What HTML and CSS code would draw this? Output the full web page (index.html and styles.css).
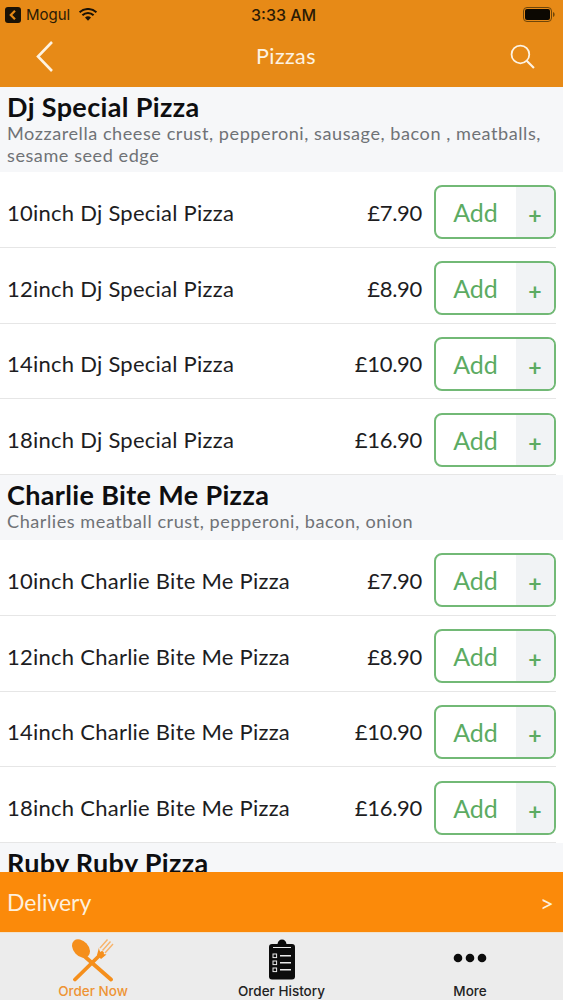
FILE: index.html
```html
<!DOCTYPE html>
<html lang="en">
<head>
<meta charset="utf-8">
<title>Pizzas</title>
<link rel="stylesheet" href="styles.css">
</head>
<body>
<div class="app">
  <header class="top">
    <div class="status">
      <div class="status-left">
        <svg class="back-badge" viewBox="0 0 16 16"><rect width="16" height="16" rx="3" fill="#1a1206"/><path d="M10 3.8 5.8 8l4.2 4.2" fill="none" stroke="#e78a17" stroke-width="2.2"/></svg>
        <span class="carrier">Mogul</span>
        <svg class="wifi" viewBox="0 0 18 13"><path d="M0.6 4.4a12 12 0 0 1 16.8 0" fill="none" stroke="#1a1206" stroke-width="2"/><path d="M3.4 7.2a8 8 0 0 1 11.2 0" fill="none" stroke="#1a1206" stroke-width="2"/><path d="M6 9.6a4.4 4.4 0 0 1 6 0L9 12.8z" fill="#1a1206"/></svg>
      </div>
      <span class="clock">3:33 AM</span>
      <svg class="battery" viewBox="0 0 32 15"><rect x="0.5" y="0.5" width="28" height="14" rx="3.5" fill="none" stroke="#6e4509"/><rect x="2" y="2" width="25" height="11" rx="2" fill="#0c0802"/><path d="M30 5v5c1.2-.4 1.6-1.4 1.6-2.5S31.200 5.400 30 5z" fill="#6e4509"/></svg>
    </div>
    <div class="nav">
      <svg class="nav-back" viewBox="0 0 18 32"><path d="M16 2 2 16.500 16 31" fill="none" stroke="#fdf3e3" stroke-width="2.600"/></svg>
      <span class="nav-title">Pizzas</span>
      <svg class="nav-search" viewBox="0 0 24 24"><circle cx="10" cy="10" r="8.500" fill="none" stroke="#fdf3e3" stroke-width="1.700"/><path d="m16 16 7 7" fill="none" stroke="#fdf3e3" stroke-width="2"/></svg>
    </div>
  </header>

  <main class="list">
    <section class="group">
      <h2>Dj Special Pizza</h2>
      <p>Mozzarella cheese crust, pepperoni, sausage, bacon , meatballs, sesame seed edge</p>
    </section>
    <div class="row"><span class="name">10inch Dj Special Pizza</span><span class="price">£7.90</span><div class="add"><span class="add-label">Add</span><span class="add-plus">+</span></div></div>
    <div class="row"><span class="name">12inch Dj Special Pizza</span><span class="price">£8.90</span><div class="add"><span class="add-label">Add</span><span class="add-plus">+</span></div></div>
    <div class="row"><span class="name">14inch Dj Special Pizza</span><span class="price">£10.90</span><div class="add"><span class="add-label">Add</span><span class="add-plus">+</span></div></div>
    <div class="row"><span class="name">18inch Dj Special Pizza</span><span class="price">£16.90</span><div class="add"><span class="add-label">Add</span><span class="add-plus">+</span></div></div>
    <section class="group group-short">
      <h2>Charlie Bite Me Pizza</h2>
      <p>Charlies meatball crust, pepperoni, bacon, onion</p>
    </section>
    <div class="row"><span class="name">10inch Charlie Bite Me Pizza</span><span class="price">£7.90</span><div class="add"><span class="add-label">Add</span><span class="add-plus">+</span></div></div>
    <div class="row"><span class="name">12inch Charlie Bite Me Pizza</span><span class="price">£8.90</span><div class="add"><span class="add-label">Add</span><span class="add-plus">+</span></div></div>
    <div class="row"><span class="name">14inch Charlie Bite Me Pizza</span><span class="price">£10.90</span><div class="add"><span class="add-label">Add</span><span class="add-plus">+</span></div></div>
    <div class="row"><span class="name">18inch Charlie Bite Me Pizza</span><span class="price">£16.90</span><div class="add"><span class="add-label">Add</span><span class="add-plus">+</span></div></div>
    <section class="group">
      <h2>Ruby Ruby Pizza</h2>
    </section>
  </main>

  <div class="delivery"><span>Delivery</span><span class="delivery-arrow">&gt;</span></div>

  <nav class="tabs">
    <div class="tab tab-active">
      <svg class="tab-icon" viewBox="0 0 46 44">
        <path d="M13 17 41 41.500" fill="none" stroke="#f58f1c" stroke-width="3.800" stroke-linecap="round"/>
        <ellipse cx="11" cy="10.500" rx="7.500" ry="10.500" transform="rotate(-42 11 10.500)" fill="#f58f1c"/>
        <path d="M32 15 5 41.500" fill="none" stroke="#f58f1c" stroke-width="3.800" stroke-linecap="round"/>
        <path d="M30 10 37.500 1.500 M32.500 12.500 40.500 3.500 M35 15 43 6" fill="none" stroke="#f7b36a" stroke-width="1.400"/>
        <path d="M29 9.500c0 4 2.500 7 7.500 7L31 21l-4-4z" fill="#f58f1c"/>
      </svg>
      <span>Order Now</span>
    </div>
    <div class="tab">
      <svg class="tab-icon" viewBox="0 0 46 44">
        <path d="M13 6h5.500c.5-3 2-4.500 4.500-4.500S27 3 27.500 6H33c2 0 3 1 3 3v29.500c0 2-1 3-3 3H13c-2 0-3-1-3-3V9c0-2 1-3 3-3z" fill="#0c0c0c"/>
        <path d="M14 9.500h18" stroke="#ececec" stroke-width="1"/>
        <g fill="none" stroke="#ececec">
          <rect x="14" y="16" width="3.600" height="3.600"/><rect x="14" y="23" width="3.600" height="3.600"/><rect x="14" y="30" width="3.600" height="3.600"/>
          <path d="M21 17.800h11M21 24.800h11M21 31.800h11" stroke-width="1.400"/>
        </g>
      </svg>
      <span>Order History</span>
    </div>
    <div class="tab">
      <svg class="tab-icon" viewBox="0 0 46 44">
        <circle cx="11" cy="20" r="4.300" fill="#0c0c0c"/><circle cx="23" cy="20" r="4.300" fill="#0c0c0c"/><circle cx="35" cy="20" r="4.300" fill="#0c0c0c"/>
      </svg>
      <span>More</span>
    </div>
  </nav>
</div>
</body>
</html>
```

FILE: styles.css
```css
* { box-sizing: border-box; margin: 0; padding: 0; }
html, body { height: 100%; overflow: hidden; }
body { font-family: "Lato", "Noto Sans", sans-serif; background: #fff; color: #1d1d1f; }
.app { height: 1000px; display: flex; flex-direction: column; }

.top { height: 87px; flex: none; background: #e78a17; }
.status { height: 29px; padding: 0 7px 0 5px; display: flex; align-items: center; justify-content: space-between; position: relative; color: #2a1a05; }
.status-left { display: flex; align-items: center; }
.back-badge { width: 16px; height: 16px; }
.carrier { font: 15px "Inter", sans-serif; margin-left: 5px; }
.wifi { width: 18px; height: 13px; margin-left: 9px; }
.clock { font: 500 16px "Inter", sans-serif; position: absolute; left: 251px; }
.battery { width: 34px; height: 15px; }

.nav { height: 58px; padding: 0 28px 4px 36px; display: flex; align-items: center; justify-content: space-between; color: #fdf3e3; }
.nav-back { width: 18px; height: 32px; }
.nav-title { font-size: 21.500px; letter-spacing: .4px; margin-left: 8px; }
.nav-search { width: 25px; height: 25px; }

.list { flex: 1; min-height: 0; overflow: hidden; }
.group { background: #f6f7f9; padding: 5px 7px 6px; }
.group-short { padding-bottom: 8px; }
.group h2 { font-size: 27px; line-height: 30px; font-weight: 700; color: #0e0e10; letter-spacing: .35px; }
.group p { font-size: 18.100px; line-height: 22px; color: #6f7276; letter-spacing: .55px; }

.row { height: 75.750px; margin-right: 7px; padding: 6px 0 0 7px; display: flex; align-items: center; border-bottom: 1px solid #e6e6e6; }
.name { flex: 1; font-size: 22px; letter-spacing: .25px; color: #1d1d1f; }
.price { font-size: 22px; letter-spacing: -.3px; color: #1d1d1f; margin-right: 12px; }
.add { width: 122px; height: 54px; border: 2px solid #72b976; border-radius: 8px; display: flex; overflow: hidden; color: #5cab62; }
.add-label { flex: 1; font-size: 25px; text-align: center; line-height: 51px; padding-right: 1px; }
.add-plus { width: 38px; background: #f1f3f5; font-size: 23px; font-weight: 700; text-align: center; line-height: 57px; }

.delivery { height: 60px; flex: none; background: #fb8a0a; color: #fdf0dd; display: flex; align-items: center; justify-content: space-between; padding: 0 9px 0 7px; font-size: 23px; }
.delivery-arrow { font-size: 24px; }

.tabs { height: 68px; flex: none; background: #ececec; display: grid; grid-template-columns: 186px 191px 186px; border-top: 1px solid #f1e2cc; }
.tab { display: flex; flex-direction: column; align-items: center; padding-top: 5px; font: 500 13.500px "Inter", sans-serif; color: #222; }
.tab-icon { width: 46px; height: 44px; }
.tab span { line-height: 16px; margin-top: 1px; }
.tab-active { color: #ee9434; }
```
